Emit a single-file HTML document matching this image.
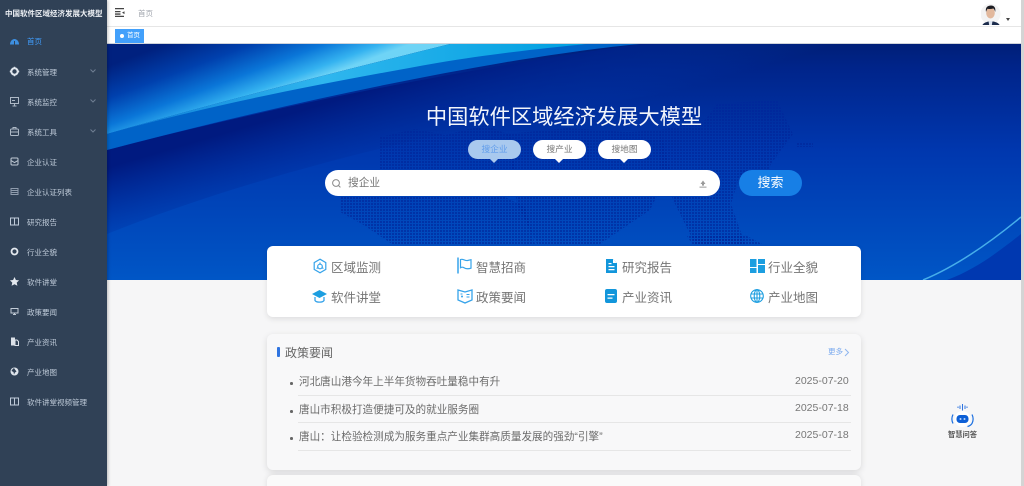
<!DOCTYPE html>
<html lang="zh"><head><meta charset="utf-8"><style>
*{box-sizing:border-box}
html,body{margin:0;padding:0;width:1024px;height:486px;overflow:hidden;background:#f6f6f7;font-family:"Liberation Sans","Noto Sans CJK SC",sans-serif}
.abs,.abs *{position:absolute}
.t{white-space:nowrap;line-height:1}
#side{left:0;top:0;width:107px;height:486px;background:#304156;box-shadow:1px 0 3px rgba(0,0,0,.25);z-index:5}
.m{left:27px;font-size:7.5px;color:#bfcbd9;white-space:nowrap;line-height:10px;margin-top:.5px}
.ic{left:9px;width:11px;height:11px}
.nav{font-size:12.5px;color:#757575;white-space:nowrap;line-height:16px}
.row{left:299px;width:551px;font-size:10.6px;color:#6b6b6b;white-space:nowrap;line-height:12px}
.date{font-size:10.5px;color:#777;line-height:12px;left:795px}
.ln{left:298px;width:553px;height:1px;background:#e6e6e6}
.dot{left:290px;width:2.5px;height:2.5px;border-radius:50%;background:#666}
.pill{top:140px;width:53px;height:19px;border-radius:10px;background:#fff;color:#777;font-size:8.7px;line-height:19px;text-align:center}
.arr{top:158px;width:0;height:0;border-left:5px solid transparent;border-right:5px solid transparent;border-top:5px solid #fff}
</style></head><body class="abs">
<!-- banner -->
<svg style="left:107px;top:44px" width="914" height="236" viewBox="0 0 914 236">
<defs>
<linearGradient id="bg" x1="0" y1="0" x2="0" y2="1"><stop offset="0" stop-color="#001f78"/><stop offset=".1" stop-color="#00248a"/><stop offset=".45" stop-color="#0037ae"/><stop offset="1" stop-color="#0056c6"/></linearGradient>
<linearGradient id="glow" gradientUnits="userSpaceOnUse" x1="60" y1="0" x2="90" y2="80"><stop offset="0" stop-color="#00217f"/><stop offset=".35" stop-color="#0040ad"/><stop offset=".65" stop-color="#0a76d8"/><stop offset=".88" stop-color="#35b3f0"/><stop offset="1" stop-color="#6fd4f6"/></linearGradient>
<linearGradient id="light" x1="0" y1="0" x2="1" y2="0"><stop offset="0" stop-color="#0a78d6"/><stop offset=".45" stop-color="#2fb6ee"/><stop offset="1" stop-color="#009fe0"/></linearGradient>
<linearGradient id="shade" gradientUnits="userSpaceOnUse" x1="200" y1="65" x2="225" y2="150"><stop offset="0" stop-color="#001a80"/><stop offset="1" stop-color="#0038ae" stop-opacity="0"/></linearGradient>
<pattern id="dots" width="3" height="3" patternUnits="userSpaceOnUse"><rect width="2" height="2" fill="#00259a" opacity=".6"/></pattern>
</defs>
<rect width="914" height="236" fill="url(#bg)"/>
<path d="M0 106C130 72 320 30 533 0H914V14C600 30 250 90 0 190Z" fill="url(#shade)"/>
<path d="M0 90C110 58 230 28 343 0H0Z" fill="url(#glow)"/>
<path d="M0 106C130 72 260 42 400 18C450 10 490 4 533 0H480C420 4 400 8 330 17C220 31 100 62 0 90Z" fill="#0063c8"/>
<path d="M0 90C100 62 200 42 330 19C390 9 440 4 480 0H343C230 28 110 58 0 90Z" fill="url(#light)"/>
<g fill="url(#dots)">
<path d="M273 93l35-8 30 6 40-10 25 10 8 50-30 10-46-6-62 8z"/>
<path d="M233 153h165l20 10 10 37H285l-30-20-22-12z"/>
<path d="M400 90l60-6 60 4 33-2 10 40-20 40-50 34H430l-20-40z"/>
<path d="M553 86l45-10 12-16 60-4 16 34-22 30-12 26-20-12-8 26 14 40h-50l-20-40-15-34z"/>
<path d="M580 192h60l15 8h-70z"/>
<path d="M333 62h12v4h-12zM462 102h-0M325 60h25v5h-25zM690 98h16v5h-16z"/>
</g>
<path d="M816 236C850 222 885 197 914 173" stroke="#46aeea" stroke-width="1.5" fill="none"/>
<path d="M840 236C870 225 895 205 914 190V236Z" fill="#0038b0"/>
</svg>
<div class="t" style="left:107px;width:914px;top:104px;text-align:center;font-size:21.25px;color:#f2f5fb;line-height:27px">中国软件区域经济发展大模型</div>
<div class="pill" style="left:468px;background:#a9c9ee;color:#5f9ceb">搜企业</div><div class="arr" style="left:489px;border-top-color:#a9c9ee"></div>
<div class="pill" style="left:533px">搜产业</div><div class="arr" style="left:554px"></div>
<div class="pill" style="left:598px">搜地图</div><div class="arr" style="left:619px"></div>
<div style="left:325px;top:170px;width:395px;height:26px;border-radius:13px;background:#fff"></div>
<svg style="left:331px;top:178px" width="11" height="11" viewBox="0 0 11 11" fill="none" stroke="#8a8a8a" stroke-width="1"><circle cx="5" cy="5" r="3.4"/><path d="M7.6 7.6l1.8 1.8"/></svg>
<div class="t" style="left:348px;top:177px;font-size:10.7px;color:#777;line-height:12px">搜企业</div>
<svg style="left:698px;top:179px" width="10" height="10" viewBox="0 0 10 10" fill="#9a9a9a"><path d="M5 1.500L7.500 5H6v1.600H4V5H2.500zM1.500 7.600h7v1h-7z"/></svg>
<div style="left:739px;top:170px;width:63px;height:26px;border-radius:13px;background:#177fe6;color:#fff;font-size:13px;line-height:26px;text-align:center">搜索</div>

<!-- nav card -->
<div style="left:267px;top:246px;width:594px;height:71px;border-radius:6px;background:#fff;box-shadow:0 2px 6px rgba(0,0,0,.1)"></div>
<svg style="left:312px;top:258px" width="16" height="16" viewBox="0 0 16 16" fill="none" stroke="#36a3ea" stroke-width="1.200"><path d="M8 1.200l5.800 3.400v6.800L8 14.800l-5.800-3.400V4.600z"/><circle cx="8" cy="8.500" r="2.300"/><path d="M8 4.500v1.700M4.600 10.500l1.500-.9M11.400 10.500l-1.500-.9"/></svg>
<div class="nav" style="left:331px;top:259.5px">区域监测</div>
<svg style="left:457px;top:257px" width="16" height="17" viewBox="0 0 16 17" fill="none" stroke="#36a3ea" stroke-width="1.200"><path d="M1 .5v16" stroke-width="1.500"/><path d="M3.500 2.500C6 1.500 8 4 10.500 3.500l3.500-.8v8.500c-3 1-5 .8-7-.5-1-.600-2.500-.600-3.500 0z"/></svg>
<div class="nav" style="left:476px;top:259.5px">智慧招商</div>
<svg style="left:605px;top:258px" width="13" height="16" viewBox="0 0 13 16"><path d="M1 1h7l4 4v10H1z" fill="#1296db"/><path d="M8 1v4h4z" fill="#fff"/><path d="M3.500 5h3v1.200h-3zM3.500 8h6v1.200h-6zM3.500 11h6v1.200h-6z" fill="#fff"/></svg>
<div class="nav" style="left:622px;top:259.5px">研究报告</div>
<svg style="left:750px;top:259px" width="15" height="14" viewBox="0 0 15 14" fill="#1c9ee0"><rect width="6.500" height="8"/><rect y="9" width="6.500" height="5"/><rect x="8" width="7" height="5"/><rect x="8" y="6" width="7" height="8"/></svg>
<div class="nav" style="left:768px;top:259.5px">行业全貌</div>
<svg style="left:312px;top:289px" width="15" height="15" viewBox="0 0 15 15"><path d="M7.500 1L15 5 7.500 9 0 5z" fill="#1c9ee0"/><path d="M3 8v3.500c1.500 2.200 7.500 2.200 9 0V8" fill="none" stroke="#36a3ea" stroke-width="1.300"/></svg>
<div class="nav" style="left:331px;top:289.5px">软件讲堂</div>
<svg style="left:457px;top:288px" width="16" height="16" viewBox="0 0 16 16" fill="none" stroke="#36a3ea" stroke-width="1.300"><path d="M1 2l7 2 7-2v10l-7 3-7-3z"/><path d="M3.500 6h2M9.500 6.500h3M9.500 9h3" stroke-width="1"/><circle cx="5" cy="8.500" r="1" fill="#36a3ea" stroke="none"/></svg>
<div class="nav" style="left:476px;top:289.5px">政策要闻</div>
<svg style="left:605px;top:289px" width="12" height="14" viewBox="0 0 12 14"><rect width="12" height="14" rx="2" fill="#1296db"/><path d="M2.500 5h7v1.300h-7zM2.500 8.500h5v1.300h-5z" fill="#fff"/></svg>
<div class="nav" style="left:622px;top:289.5px">产业资讯</div>
<svg style="left:750px;top:289px" width="14" height="14" viewBox="0 0 14 14" fill="none" stroke="#1c9ee0" stroke-width="1.100"><circle cx="7" cy="7" r="6.300"/><ellipse cx="7" cy="7" rx="2.800" ry="6.300"/><path d="M1 5h12M1 9h12M7 .7v12.600"/></svg>
<div class="nav" style="left:768px;top:289.5px">产业地图</div>

<!-- news card -->
<div style="left:267px;top:334px;width:594px;height:136px;border-radius:6px;background:#f8f8f9;box-shadow:0 2px 7px rgba(0,0,0,.12)"></div>
<div style="left:277px;top:347px;width:3px;height:10px;background:#2f74e0;border-radius:1px"></div>
<div class="t" style="left:285px;top:346px;font-size:12px;color:#666;line-height:14px">政策要闻</div>
<div class="t" style="left:828px;top:347px;font-size:7.500px;color:#79a9ee;line-height:10px">更多</div>
<svg style="left:844px;top:348px" width="6" height="9" viewBox="0 0 6 9" fill="none" stroke="#8fb6ee"><path d="M1 1l3.500 3.500L1 8"/></svg>
<div class="dot" style="top:382px"></div><div class="row" style="top:376px">河北唐山港今年上半年货物吞吐量稳中有升</div><div class="date t" style="top:375px">2025-07-20</div><div class="ln" style="top:395px"></div>
<div class="dot" style="top:410px"></div><div class="row" style="top:404px">唐山市积极打造便捷可及的就业服务圈</div><div class="date t" style="top:402px">2025-07-18</div><div class="ln" style="top:422px"></div>
<div class="dot" style="top:437px"></div><div class="row" style="top:431px">唐山：让检验检测成为服务重点产业集群高质量发展的强劲“引擎”</div><div class="date t" style="top:429px">2025-07-18</div><div class="ln" style="top:450px"></div>
<div style="left:267px;top:475px;width:594px;height:20px;border-radius:6px;background:#fafafa;box-shadow:0 0 6px rgba(0,0,0,.1)"></div>

<!-- robot -->
<svg style="left:948px;top:400px" width="29" height="29" viewBox="0 0 29 29" fill="none">
<path d="M10 6.500v1.500M12 5.500v3.500M14.500 4v6.500M17 5.500v3.500M19 6.500v1.500" stroke="#2f74e0" stroke-width="1"/>
<circle cx="14.500" cy="19" r="8" fill="#fff"/><rect x="8.500" y="15" width="12" height="8" rx="3.500" fill="#0d5fd6"/>
<circle cx="12.500" cy="19" r="1" fill="#bcd6fa"/><circle cx="16.500" cy="19" r="1" fill="#bcd6fa"/>
<path d="M5 14.500c-1.500 3-1.500 6 0 9M24 14.500c1.500 3 1.500 6 0 9c-1 1.500-2.500 2.500-4.500 3" stroke="#1b6fe0" stroke-width="1.200"/>
</svg>
<div class="t" style="left:948px;top:430px;font-size:7.250px;color:#555;font-weight:bold;line-height:10px">智慧问答</div>

<!-- top -->
<div style="left:107px;top:0;width:917px;height:27px;background:#fff;border-bottom:1px solid #e6e6e6"></div>
<div style="left:107px;top:27px;width:917px;height:17px;background:#fff;border-bottom:1px solid #cfd3da"></div>
<svg style="left:115px;top:8px" width="10" height="9" viewBox="0 0 10 9" fill="#444"><path d="M0 0h9v1.300H0zM0 3h5.500v1.300H0zM0 5.400h5.500v1.300H0zM0 7.700h9V9H0zM9.500 3.200v2.900L7 4.600z"/></svg>
<div class="t" style="left:138px;top:8.500px;font-size:7.500px;color:#a0a5ad;line-height:10px">首页</div>
<div style="left:115px;top:29px;width:29px;height:14px;background:#42a0fb"></div>
<div style="left:120px;top:34px;width:4px;height:4px;border-radius:50%;background:#fff"></div>
<div class="t" style="left:127px;top:31px;font-size:6.500px;color:#fff;line-height:10px">首页</div>
<svg style="left:981px;top:3px" width="20" height="22" viewBox="0 0 20 22"><circle cx="9.500" cy="11" r="10" fill="#f3f3f3"/><path d="M1 24c0-3.500 3-4.500 6.500-5.500h5c3.500 1 6.500 2 6.500 5.500z" fill="#1c2c4c"/><path d="M7.500 18h4L10.500 24h-2z" fill="#dfe6f2"/><ellipse cx="9.500" cy="10" rx="4.300" ry="5.500" fill="#e2b89c"/><path d="M5 9C4 4 7 2.500 10 2.500s5 2 4.200 6.500c-.5-2-1.200-3.200-2-3.500-2 .6-4.200.6-5.600.2C6 6.500 5.400 7.500 5 9z" fill="#1c1c22"/></svg>
<div style="left:1006px;top:18px;width:0;height:0;border-left:2.500px solid transparent;border-right:2.500px solid transparent;border-top:3px solid #444"></div>
<div style="left:1021px;top:0;width:3px;height:486px;background:#d4d4d4"></div>

<!-- sidebar -->
<div id="side">
<div class="t" style="left:5px;top:9px;font-size:7.500px;font-weight:bold;color:#eef1f5;line-height:10px;letter-spacing:0">中国软件区域经济发展大模型</div>
<svg class="ic" style="top:36px" viewBox="0 0 11 11"><path d="M1 8.500C1 5.500 3 3 5.500 3S10 5.500 10 8.500z" fill="#3d8fe0"/><path d="M5.500 8.500V5" stroke="#304156"/></svg><div class="m" style="top:36.500px;color:#409eff">首页</div>
<svg class="ic" style="top:66px" viewBox="0 0 11 11"><circle cx="5.500" cy="5.500" r="3.200" fill="none" stroke="#dfe5ec" stroke-width="2"/><path d="M5.500 .8v1.500M5.500 8.700v1.500M.8 5.500h1.500M8.700 5.500h1.500" stroke="#dfe5ec" stroke-width="1.400"/></svg><div class="m" style="top:67px">系统管理</div>
<svg class="ic" style="top:96px" viewBox="0 0 11 11" fill="none" stroke="#aeb9c6"><rect x="1.500" y="1.500" width="8" height="6"/><path d="M5.500 7.500V10M3.500 10h4M3 4.500h3"/></svg><div class="m" style="top:97px">系统监控</div>
<svg class="ic" style="top:126px" viewBox="0 0 11 11" fill="none" stroke="#aeb9c6"><rect x="1.500" y="3" width="8" height="6.500" rx="1"/><path d="M4 3V1.500h3V3M1.500 6h8"/></svg><div class="m" style="top:127px">系统工具</div>
<svg style="left:90px;top:69px;position:absolute" width="6" height="4" fill="none" stroke="#6f7e92" viewBox="0 0 6 4"><path d="M.5.500L3 3 5.500.500"/></svg>
<svg style="left:90px;top:99px;position:absolute" width="6" height="4" fill="none" stroke="#6f7e92" viewBox="0 0 6 4"><path d="M.5.500L3 3 5.500.500"/></svg>
<svg style="left:90px;top:129px;position:absolute" width="6" height="4" fill="none" stroke="#6f7e92" viewBox="0 0 6 4"><path d="M.5.500L3 3 5.500.500"/></svg>
<svg class="ic" style="top:156px" viewBox="0 0 11 11" fill="none" stroke="#c2ccd7"><rect x="2" y="2" width="7" height="7" rx="1"/><path d="M2 4.500l3.500 2 3.500-2"/></svg><div class="m" style="top:157px">企业认证</div>
<svg class="ic" style="top:186px" viewBox="0 0 11 11" fill="none" stroke="#8f9cad"><rect x="2" y="2.500" width="7" height="6"/><path d="M2 4.500h7M2 6.500h7"/></svg><div class="m" style="top:187px">企业认证列表</div>
<svg class="ic" style="top:216px" viewBox="0 0 11 11" fill="none" stroke="#bfcbd9"><rect x="1.500" y="2" width="8" height="7"/><path d="M5.500 2v7"/></svg><div class="m" style="top:217px">研究报告</div>
<svg class="ic" style="top:246px" viewBox="0 0 11 11"><circle cx="5.500" cy="5.500" r="3" fill="none" stroke="#e4e9ef" stroke-width="1.800"/></svg><div class="m" style="top:247px">行业全貌</div>
<svg class="ic" style="top:276px" viewBox="0 0 11 11"><path d="M5.500 1l1.400 3 3.200.4-2.400 2.200.7 3.200-2.900-1.600-2.900 1.600.7-3.200L.9 4.400 4.100 4z" fill="#e4e9ef"/></svg><div class="m" style="top:277px">软件讲堂</div>
<svg class="ic" style="top:306px" viewBox="0 0 11 11" fill="none" stroke="#c2ccd7"><rect x="2" y="2.500" width="7" height="4.500"/><path d="M5.500 7v1.500M4 8.500h3"/></svg><div class="m" style="top:307px">政策要闻</div>
<svg class="ic" style="top:336px" viewBox="0 0 11 11"><path d="M2 1.500h4v8H2z" fill="#dbe1e8"/><path d="M6 4h2l1.500 1.500V9.500H6z" fill="none" stroke="#dbe1e8"/></svg><div class="m" style="top:337px">产业资讯</div>
<svg class="ic" style="top:366px" viewBox="0 0 11 11"><circle cx="5.500" cy="5.500" r="4" fill="#dfe5ec"/><path d="M5 2c-1 1-2 1.500-2.500 3l2 1 .5 2.500 1-2 1.500-1L6 3.500z" fill="#304156"/></svg><div class="m" style="top:367px">产业地图</div>
<svg class="ic" style="top:396px" viewBox="0 0 11 11" fill="none" stroke="#bfcbd9"><rect x="1.500" y="2" width="8" height="7"/><path d="M5.500 2v7"/></svg><div class="m" style="top:397px">软件讲堂视频管理</div>
</div>
</body></html>
